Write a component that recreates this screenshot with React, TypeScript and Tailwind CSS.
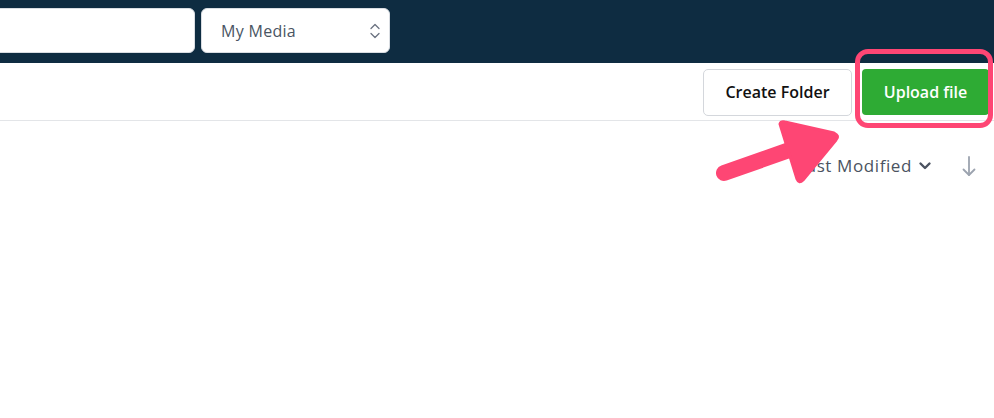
import React from "react";

const font = { fontFamily: '"Open Sans", "Noto Sans", sans-serif' };

export default function App() {
  return (
    <div className="relative w-[994px] h-[418px] overflow-hidden bg-white" style={font}>
      {/* top header */}
      <div className="h-[63px] bg-[#0e2c41] flex items-start pt-2 gap-[6px]">
        <div className="ml-[-20px] w-[215px] h-[45px] bg-white rounded-md border border-[#d9dde2]" />
        <div className="w-[189px] h-[45px] bg-white rounded-md border border-[#d9dde2] flex items-center justify-between pl-[19px] pr-[8px]">
          <span className="text-[16px] tracking-[0.3px] text-[#4a5563]">My Media</span>
          <svg width="12" height="20" viewBox="0 0 12 20" fill="none" stroke="#6b7280" strokeWidth="1.3" strokeLinecap="round" strokeLinejoin="round">
            <path d="M2 7.5 L6 3.5 L10 7.5" />
            <path d="M2 12.5 L6 16.5 L10 12.5" />
          </svg>
        </div>
      </div>

      {/* toolbar */}
      <div className="h-[58px] border-b border-[#e3e5e8] flex items-center justify-end pr-[5px] gap-[10px]">
        <button className="w-[149px] h-[47px] rounded-[5px] border border-[#d4d7dc] bg-white text-[16px] font-semibold text-[#111] mt-[1px]">
          Create Folder
        </button>
        <button className="w-[127px] h-[46px] rounded-[4px] bg-[#2eab34] text-[16px] font-semibold text-white">
          Upload file
        </button>
      </div>

      {/* sort row */}
      <div className="flex items-center justify-end pr-[18px] pt-[32px] gap-[30px]">
        <div className="flex items-center gap-[6px]">
          <span className="text-[17px] tracking-[0.6px] font-medium text-[#4b5361]">Last Modified</span>
          <svg width="14" height="12" viewBox="0 0 14 12" fill="none" stroke="#4b5361" strokeWidth="2.4" strokeLinecap="round" strokeLinejoin="round">
            <path d="M2.5 3.5 L7 8 L11.5 3.5" />
          </svg>
        </div>
        <svg width="14" height="22" viewBox="0 0 14 22" fill="none" stroke="#9ca3af" strokeWidth="1.8" strokeLinecap="round" strokeLinejoin="round">
          <path d="M7 2 V20" />
          <path d="M1.5 14.5 L7 20 L12.5 14.5" />
        </svg>
      </div>

      {/* highlight box */}
      <div className="absolute left-[855px] top-[49px] w-[138px] h-[79px] rounded-[13px] border-[5px] border-[#fe4674]" />

      {/* annotation arrow */}
      <svg className="absolute left-0 top-0" width="994" height="418" viewBox="0 0 994 418">
        <path d="M724 173 L795 148" stroke="#fe4674" strokeWidth="16" strokeLinecap="round" />
        <path d="M780 124 Q781 121 785 122 L834 133 Q840 136 836 140 L803 180 Q799 184 797 179 Z" fill="#fe4674" stroke="#fe4674" strokeWidth="3" strokeLinejoin="round" />
      </svg>
    </div>
  );
}
